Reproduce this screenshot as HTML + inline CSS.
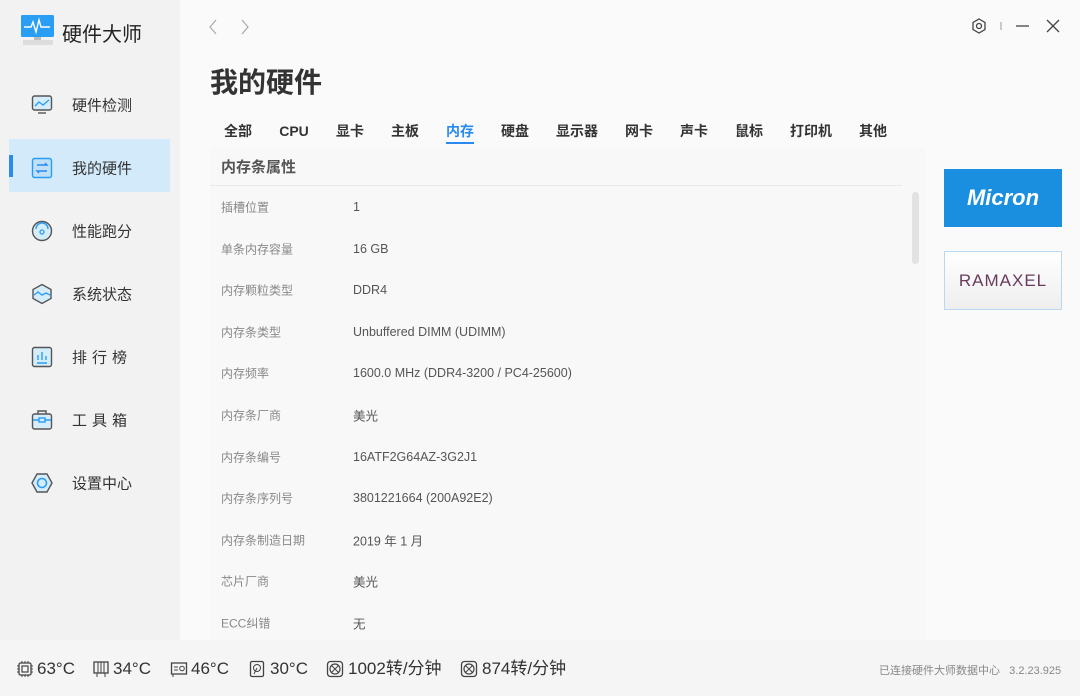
<!DOCTYPE html>
<html><head><meta charset="utf-8"><style>
*{margin:0;padding:0;box-sizing:border-box}
body{width:1080px;height:696px;overflow:hidden;background:#fafafa;font-family:"Liberation Sans","Noto Sans CJK SC",sans-serif;position:relative;color:#333}
.a{position:absolute;white-space:nowrap}
#side{position:absolute;left:0;top:0;width:180px;height:640px;background:#f2f2f2}
.nav{position:absolute;left:72px;font-size:15px;color:#333;transform:translateY(-50%)}
.ic{position:absolute;left:31px;width:22px;height:22px}
.tab{position:absolute;top:121px;height:20px;line-height:20px;font-size:14px;font-weight:bold;color:#333;transform:translateX(-50%)}
.lab{position:absolute;left:221px;font-size:12px;color:#888;transform:translateY(-50%)}
.val{position:absolute;left:353px;font-size:12.5px;color:#555;transform:translateY(-50%)}
#bot{position:absolute;left:0;top:640px;width:1080px;height:56px;background:#f5f5f5}
.st{position:absolute;top:658px;height:22px;line-height:22px;font-size:17px;color:#333}
.si{position:absolute;top:660px;width:18px;height:18px}
</style></head><body>
<div id="side"></div>
<svg class="a" style="left:20px;top:14px" width="36" height="34" viewBox="0 0 36 34"><rect x="1" y="1" width="33" height="22" rx="1.5" fill="#2a9df4"/><path d="M4 13h7l2-5 3 10 3-12 2 7h9" stroke="#fff" stroke-width="1.4" fill="none"/><rect x="14" y="23" width="7" height="3" fill="#bbb"/><rect x="3" y="26" width="30" height="5" fill="#ddd"/></svg>
<div class="a" style="left:62px;top:18px;font-size:20px;color:#222">硬件大师</div>
<div class="a" style="left:9px;top:139px;width:161px;height:53px;background:#d3eafa"></div>
<div class="a" style="left:9px;top:155px;width:4px;height:22px;background:#2a8af0"></div>
<svg class="ic" style="top:94px" viewBox="0 0 22 22"><rect x="1.5" y="2" width="19" height="14" rx="2" fill="#d5ecfb" stroke="#555" stroke-width="1.4"/><path d="M4 12l4-4 4 3 6-5" stroke="#2a9df4" stroke-width="1.4" fill="none"/><path d="M7 19h8" stroke="#555" stroke-width="1.4"/></svg>
<svg class="ic" style="top:157px" viewBox="0 0 22 22"><rect x="1.5" y="1.5" width="19" height="19" rx="2" fill="#bfe0f7" stroke="#2a9df4" stroke-width="1.4"/><path d="M6 8h10l-2-2M16 14H6l2 2" stroke="#2a8af0" stroke-width="1.4" fill="none"/></svg>
<svg class="ic" style="top:220px" viewBox="0 0 22 22"><circle cx="11" cy="11" r="9.5" fill="#d5ecfb" stroke="#555" stroke-width="1.4"/><path d="M5 9a6 6 0 0 1 12 0" stroke="#2a9df4" stroke-width="1.4" fill="none"/><circle cx="11" cy="12" r="2" fill="none" stroke="#2a9df4" stroke-width="1.3"/></svg>
<svg class="ic" style="top:283px" viewBox="0 0 22 22"><path d="M11 1.5l9 5v9l-9 5-9-5v-9z" fill="#d5ecfb" stroke="#555" stroke-width="1.4"/><path d="M3 12l4-3 4 3 4-2 4 2" stroke="#2a9df4" stroke-width="1.4" fill="none"/></svg>
<svg class="ic" style="top:346px" viewBox="0 0 22 22"><rect x="1.5" y="1.5" width="19" height="19" rx="2" fill="#d5ecfb" stroke="#555" stroke-width="1.4"/><path d="M7 14V9M11 14V6M15 14v-4M6 17h10" stroke="#2a9df4" stroke-width="1.4"/></svg>
<svg class="ic" style="top:409px" viewBox="0 0 22 22"><path d="M7 5V2h8v3" stroke="#555" stroke-width="1.4" fill="none"/><rect x="1.5" y="5" width="19" height="15" rx="2" fill="#d5ecfb" stroke="#555" stroke-width="1.4"/><rect x="8" y="9" width="6" height="4" fill="none" stroke="#2a9df4" stroke-width="1.4"/><path d="M2 11h6M14 11h6" stroke="#2a9df4" stroke-width="1.4"/></svg>
<svg class="ic" style="top:472px" viewBox="0 0 22 22"><path d="M6 2h10l5 9-5 9H6l-5-9z" fill="#d5ecfb" stroke="#555" stroke-width="1.4"/><circle cx="11" cy="11" r="4.5" fill="none" stroke="#2a9df4" stroke-width="1.6"/></svg>
<div class="nav" style="top:105px">硬件检测</div>
<div class="nav" style="top:168px">我的硬件</div>
<div class="nav" style="top:231px">性能跑分</div>
<div class="nav" style="top:294px">系统状态</div>
<div class="nav" style="top:357px;letter-spacing:5px">排行榜</div>
<div class="nav" style="top:420px;letter-spacing:5px">工具箱</div>
<div class="nav" style="top:483px">设置中心</div>

<svg class="a" style="left:206px;top:18px" width="50" height="18"><path d="M10 2L4 9l6 7" stroke="#aaa" fill="none" stroke-width="1.2"/><path d="M36 2l6 7-6 7" stroke="#aaa" fill="none" stroke-width="1.2"/></svg>
<svg class="a" style="left:968px;top:16px" width="100" height="20"><path d="M11 3l6 3.5v7L11 17l-6-3.5v-7z" fill="none" stroke="#444" stroke-width="1.3"/><circle cx="11" cy="10" r="2.5" fill="none" stroke="#444" stroke-width="1.3"/><path d="M33 6v8" stroke="#999"/><path d="M48 10h13" stroke="#444" stroke-width="1.3"/><path d="M79 4l12 12M91 4L79 16" stroke="#444" stroke-width="1.3"/></svg>
<div class="a" style="left:210px;top:61px;font-size:28px;font-weight:bold;color:#333">我的硬件</div>

<div class="tab" style="left:238px">全部</div><div class="tab" style="left:294px">CPU</div><div class="tab" style="left:350px">显卡</div><div class="tab" style="left:405px">主板</div><div class="tab" style="left:460px;color:#2a8af0">内存</div><div class="tab" style="left:515px">硬盘</div><div class="tab" style="left:577px">显示器</div><div class="tab" style="left:639px">网卡</div><div class="tab" style="left:694px">声卡</div><div class="tab" style="left:749px">鼠标</div><div class="tab" style="left:811px">打印机</div><div class="tab" style="left:873px">其他</div>
<div class="a" style="left:446px;top:142px;width:28px;height:2px;background:#2a8af0"></div>

<div class="a" style="left:210px;top:148px;width:715px;height:492px;background:#f8f8f8"></div>
<div class="a" style="left:221px;top:156px;font-size:15px;font-weight:bold;color:#555">内存条属性</div>
<div class="a" style="left:210px;top:185px;width:692px;height:1px;background:#e8e8e8"></div>
<div class="a" style="left:912px;top:192px;width:7px;height:72px;border-radius:4px;background:#e2e2e2"></div>

<div class="lab" style="top:207px">插槽位置</div><div class="val" style="top:207px">1</div>
<div class="lab" style="top:249px">单条内存容量</div><div class="val" style="top:249px">16 GB</div>
<div class="lab" style="top:290px">内存颗粒类型</div><div class="val" style="top:290px">DDR4</div>
<div class="lab" style="top:332px">内存条类型</div><div class="val" style="top:332px">Unbuffered DIMM (UDIMM)</div>
<div class="lab" style="top:373px">内存频率</div><div class="val" style="top:373px">1600.0 MHz (DDR4-3200 / PC4-25600)</div>
<div class="lab" style="top:415px">内存条厂商</div><div class="val" style="top:415px">美光</div>
<div class="lab" style="top:457px">内存条编号</div><div class="val" style="top:457px">16ATF2G64AZ-3G2J1</div>
<div class="lab" style="top:498px">内存条序列号</div><div class="val" style="top:498px">3801221664 (200A92E2)</div>
<div class="lab" style="top:540px">内存条制造日期</div><div class="val" style="top:540px">2019 年 1 月</div>
<div class="lab" style="top:581px">芯片厂商</div><div class="val" style="top:581px">美光</div>
<div class="lab" style="top:623px">ECC纠错</div><div class="val" style="top:623px">无</div>

<div class="a" style="left:944px;top:169px;width:118px;height:58px;background:#1a8fe0;color:#fff;font-size:22px;font-weight:bold;text-align:center;line-height:58px;font-style:italic">Micron</div>
<div class="a" style="left:944px;top:251px;width:118px;height:59px;background:linear-gradient(#fff,#eee);border:1px solid #b8d8f4;color:#6a3a5e;font-size:17px;text-align:center;line-height:57px;letter-spacing:1px">RAMAXEL</div>

<div id="bot"></div>
<svg class="si" style="left:16px" viewBox="0 0 18 18"><rect x="3" y="3" width="12" height="12" rx="1.5" fill="none" stroke="#444" stroke-width="1.3"/><rect x="6" y="6" width="6" height="6" fill="none" stroke="#444" stroke-width="1.2"/><path d="M6 1v2M9 1v2M12 1v2M6 15v2M9 15v2M12 15v2M1 6h2M1 9h2M1 12h2M15 6h2M15 9h2M15 12h2" stroke="#444"/></svg>
<div class="st" style="left:37px">63°C</div>
<svg class="si" style="left:92px" viewBox="0 0 18 18"><rect x="2" y="2" width="14" height="11" fill="none" stroke="#444" stroke-width="1.3"/><path d="M6 2v11M9 2v11M12 2v11M5 13v4M13 13v4" stroke="#444"/></svg>
<div class="st" style="left:113px">34°C</div>
<svg class="si" style="left:170px" viewBox="0 0 18 18"><rect x="1.5" y="3" width="15" height="11" fill="none" stroke="#444" stroke-width="1.3"/><path d="M4 7h4M4 10h4" stroke="#444"/><circle cx="12" cy="8.5" r="2.3" fill="none" stroke="#444"/><path d="M3 14v3" stroke="#444"/></svg>
<div class="st" style="left:191px">46°C</div>
<svg class="si" style="left:248px" viewBox="0 0 18 18"><rect x="2.5" y="1.5" width="13" height="15" rx="1.5" fill="none" stroke="#444" stroke-width="1.3"/><circle cx="9" cy="8" r="3.5" fill="none" stroke="#444"/><path d="M9 8l-3 6" stroke="#444"/></svg>
<div class="st" style="left:270px">30°C</div>
<svg class="si" style="left:326px" viewBox="0 0 18 18"><rect x="1.5" y="1.5" width="15" height="15" rx="3" fill="none" stroke="#444" stroke-width="1.3"/><circle cx="9" cy="9" r="5" fill="none" stroke="#444" stroke-width="1.2"/><path d="M5.5 5.5l7 7M12.5 5.5l-7 7" stroke="#444"/></svg>
<div class="st" style="left:348px">1002转/分钟</div>
<svg class="si" style="left:460px" viewBox="0 0 18 18"><rect x="1.5" y="1.5" width="15" height="15" rx="3" fill="none" stroke="#444" stroke-width="1.3"/><circle cx="9" cy="9" r="5" fill="none" stroke="#444" stroke-width="1.2"/><path d="M5.5 5.5l7 7M12.5 5.5l-7 7" stroke="#444"/></svg>
<div class="st" style="left:482px">874转/分钟</div>
<div class="a" style="left:879px;top:662px;font-size:11px;color:#888">已连接硬件大师数据中心&nbsp;&nbsp;&nbsp;3.2.23.925</div>
</body></html>
